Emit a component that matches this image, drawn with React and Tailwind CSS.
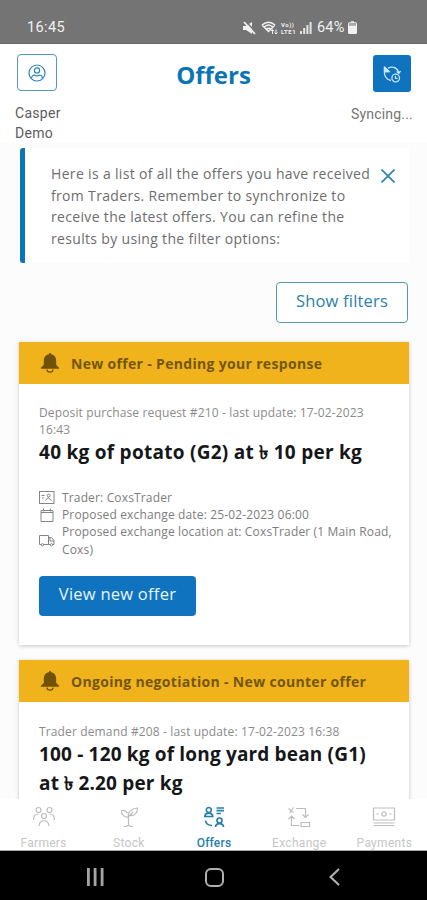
import React from 'react';

const openSans = "font-['Open_Sans','Noto_Sans',sans-serif]";

function Line({ children, className = '' }) {
  return <span className={`block whitespace-nowrap ${className}`}>{children}</span>;
}

function StatusBar() {
  return (
    <div className="flex h-11 shrink-0 items-center border-b border-[#686868] bg-[#747474] pt-[12px] pl-[27px] text-[14px] text-[#f1f1f1]">
      <span className="w-[216px] text-[14.5px] tracking-[0.4px]">16:45</span>
      <svg className="h-[14px] w-[13px]" viewBox="0 0 13 14">
        <path d="M0 5h3l6-4v12L3 9H0z" fill="#f1f1f1" />
        <path d="M2.500 0l10.500 11.500" stroke="#747474" strokeWidth="1.600" />
        <path d="M1 1l11 12" stroke="#f1f1f1" strokeWidth="1.800" />
      </svg>
      <svg className="ml-[5px] h-[14px] w-[17px]" viewBox="0 0 17 14" fill="none" stroke="#f1f1f1" strokeWidth="1.5">
        <path d="M1 4c4-3.500 9-3.500 13 0M3 6.300c3-3 6-3 9 0M5 8.500c2-1.800 3-1.800 5 0M1 4l6.500 6.500L14 4" />
        <path d="M11.500 13V8.500M10 10l1.500-1.500L13 10M15 8.500V13M13.700 11.500L15 13l1.500-1.500" strokeWidth="1" />
      </svg>
      <span className="ml-[3px] flex w-[17px] flex-col text-[6px] leading-[7px] font-bold tracking-[0.500px]">
        <span>Vo))</span>
        <span>LTE1</span>
      </span>
      <svg className="ml-[2px] h-[12px] w-[12px]" viewBox="0 0 12 12" fill="#e4e4e4">
        <path d="M0 9h2v3H0zM3.200 6h2v6h-2zM6.400 3h2v9h-2zM9.600 0h2v12h-2z" />
      </svg>
      <span className="ml-[5px] w-[30px] text-[14.5px] tracking-[0.2px] whitespace-nowrap">64%</span>
      <svg className="ml-[1px] h-[13px] w-[9px]" viewBox="0 0 9 13">
        <rect x="3" width="3" height="2" fill="#cfcfcf" />
        <rect y="1.300" width="9" height="11.700" rx="1.500" fill="#f1f1f1" />
        <rect x="1" y="2" width="7" height="2.800" fill="#aaa" />
      </svg>
    </div>
  );
}

function Header() {
  return (
    <header className="flex h-[99px] shrink-0 justify-between bg-white px-[15px] pt-[10px]">
      <div className="flex w-[80px] flex-col pl-[1.500px]">
        <button className="flex h-10 w-[40px] items-center justify-center rounded-[4px] border border-[#5398bd]">
          <svg className="h-[18px] w-[18px]" viewBox="0 0 18 18" fill="none" stroke="#2b85b7" strokeWidth="1.200">
            <circle cx="9" cy="9" r="8" />
            <circle cx="9" cy="6.500" r="2.600" />
            <path d="M3.500 14.500c.3-3 1.500-3.500 3-3.500c1.500 1 3.500 1 5 0c1.500 0 2.700.500 3 3.500" />
          </svg>
        </button>
        <div className="mt-[12px] -ml-[1.500px] text-[14px] leading-5 tracking-[0.3px] text-[#5c5c5c]">
          <Line>Casper</Line>
          <Line>Demo</Line>
        </div>
      </div>
      <h1 className={`${openSans} pt-[5px] text-[24px] leading-[31px] font-bold text-[#0b74b5]`}>Offers</h1>
      <div className="flex w-[80px] flex-col items-end">
        <button className="mt-[1px] mr-[1px] flex h-[37px] w-[38px] items-center justify-center rounded-[3px] bg-[#0f73c0]">
          <svg className="h-[18px] w-[18px]" viewBox="0 0 18 18" fill="none" stroke="#c9e5f7" strokeWidth="1.300">
            <path d="M5 3.200A7 7 0 0 1 15.700 8M2 5.500C.3 9.500 3 14.800 8 15.500M1.500 2v4.500H6M1.500 2L6 6.500" />
            <path d="M1.500 2.500v4H6z" fill="#c9e5f7" />
            <circle cx="12.700" cy="13" r="3.800" />
            <path d="M12.500 11v2.300h2M13.500 6.500l2.300 1.800 1.700-2.300" />
          </svg>
        </button>
        <span className="mt-[12px] -mr-[1px] text-[14px] leading-5 tracking-[0.2px] text-[#757575]">Syncing...</span>
      </div>
    </header>
  );
}

function Bell() {
  return (
    <svg className="h-[20px] w-[20px]" viewBox="0 0 20 20" fill="#6f5207">
      <path d="M10 0C9.300 0 9 .500 9 1.200C5.500 1.800 3.800 4.500 3.800 8v3.500C3.800 13 1 13.500.8 15.800h18.400C19 13.500 16.200 13 16.200 11.500V8c0-3.500-1.700-6.200-5.200-6.800C11 .500 10.700 0 10 0z" />
      <path d="M7 16.500a3 2.600 0 0 0 6 0" fill="none" stroke="#6f5207" strokeWidth="1.200" />
    </svg>
  );
}

function CardHeader({ children }) {
  return (
    <div className="flex h-[42px] items-center gap-[11px] bg-[#f1b31b] pl-[21px] text-[14px] font-bold text-[#73560c]">
      <Bell />
      {children}
    </div>
  );
}

function TraderIcon() {
  return (
    <svg className="h-[13px] w-[16px] shrink-0" viewBox="0 0 16 13" fill="none" stroke="#858585">
      <rect x=".5" y=".5" width="14.500" height="12" />
      <path d="M2.500 4.500h3M3 7h2M6.500 9.500L9 6.500l3.500 3M8.200 4.500a1.500 1.500 0 1 0 3 0a1.500 1.500 0 1 0-3 0" />
    </svg>
  );
}

function DateIcon() {
  return (
    <svg className="h-[14px] w-[16px] shrink-0" viewBox="0 0 16 14" fill="none" stroke="#858585">
      <path d="M2 2.500h12v11h-12zM2 4.500h12M4.500 .500v3M11.500 .500v3" />
    </svg>
  );
}

function TruckIcon() {
  return (
    <svg className="h-[13px] w-[16px] shrink-0" viewBox="0 0 16 13" fill="none" stroke="#858585">
      <path d="M2.500 10.500h-2v-9h9v9h-5M9.500 3.500h3l2.500 3v4h-1.500M9.500 10.500h2M11 4v3h4" />
      <circle cx="3.500" cy="10.800" r="1.200" />
      <circle cx="12.500" cy="10.800" r="1.200" />
    </svg>
  );
}

function OfferOne() {
  return (
    <article className="h-[303px] shrink-0 bg-white shadow-[0_1px_4px_rgba(0,0,0,0.22)]">
      <CardHeader>
        <Line className="tracking-[0.320px]">New offer - Pending your response</Line>
      </CardHeader>
      <div className="px-5 pt-[20px]">
        <div className="text-[12px] leading-[17px] tracking-[0.140px] text-[#8b8b8b]">
          <Line>Deposit purchase request #210 - last update: 17-02-2023</Line>
          <Line>16:43</Line>
        </div>
        <h2 className="text-[19px] leading-[29px] font-bold tracking-[0.270px] text-[#151719]">
          <Line>40 kg of potato (G2) at ৳ 10 per kg</Line>
        </h2>
        <ul className="mt-[22px] text-[12px] leading-[17.200px] tracking-[0.150px] text-[#7d7d7d]">
          <li className="flex items-center gap-[7px]"><TraderIcon /><Line>Trader: CoxsTrader</Line></li>
          <li className="flex items-center gap-[7px]"><DateIcon /><Line>Proposed exchange date: 25-02-2023 06:00</Line></li>
          <li className="flex items-center gap-[7px]">
            <TruckIcon />
            <div>
              <Line>Proposed exchange location at: CoxsTrader (1 Main Road,</Line>
              <Line>Coxs)</Line>
            </div>
          </li>
        </ul>
        <button className="mt-[18px] flex h-10 w-[157px] items-center justify-center rounded-[4px] bg-[#0f73c0] pb-[2px] text-[16.500px] tracking-[0.250px] text-[#e9f5fd]">
          View new offer
        </button>
      </div>
    </article>
  );
}

function OfferTwo() {
  return (
    <article className="mt-[15px] h-[180px] shrink-0 bg-white shadow-[0_1px_4px_rgba(0,0,0,0.22)]">
      <CardHeader>
        <Line className="tracking-[0.320px]">Ongoing negotiation - New counter offer</Line>
      </CardHeader>
      <div className="px-5 pt-[21px]">
        <Line className="text-[12px] leading-[17px] tracking-[0.140px] text-[#8b8b8b]">Trader demand #208 - last update: 17-02-2023 16:38</Line>
        <h2 className="text-[19px] leading-[28.500px] font-bold tracking-[0.170px] text-[#151719]">
          <Line>100 - 120 kg of long yard bean (G1)</Line>
          <Line>at ৳ 2.20 per kg</Line>
        </h2>
      </div>
    </article>
  );
}

function Main() {
  return (
    <main className={`${openSans} flex min-h-0 flex-1 flex-col overflow-hidden bg-[#fcfcfc] pt-[5px] pr-[18px] pl-[19px]`}>
      <section className="ml-[1px] flex h-[115px] shrink-0 rounded-l-[3px] border-l-[5px] border-[#0876b8] bg-white pt-[15px] pl-[26px]">
        <p className="w-[330px] text-[14px] leading-[21.700px] tracking-[0.330px] text-[#6d6d6d]">
          <Line>Here is a list of all the offers you have received</Line>
          <Line>from Traders. Remember to synchronize to</Line>
          <Line>receive the latest offers. You can refine the</Line>
          <Line>results by using the filter options:</Line>
        </p>
        <svg className="mt-[6px] h-[14px] w-[14px]" viewBox="0 0 14 14" stroke="#2b85b7" strokeWidth="1.700">
          <path d="M.5.5l13 13M13.500.500l-13 13" />
        </svg>
      </section>
      <button className="mt-[19px] mr-[1px] mb-[19px] flex h-[41px] w-[132px] shrink-0 items-center justify-center self-end rounded-[4px] border border-[#5398ad] bg-white pb-[3px] text-[16.500px] tracking-[0.200px] text-[#2b80ad]">
        Show filters
      </button>
      <OfferOne />
      <OfferTwo />
    </main>
  );
}

const tabs = [
  {
    label: 'Farmers',
    icon: <path d="M4 4a2.500 2.500 0 1 0 5 0a2.500 2.500 0 1 0-5 0M15 4a2.500 2.500 0 1 0 5 0a2.500 2.500 0 1 0-5 0M9.500 10a2.500 2.500 0 1 0 5 0a2.500 2.500 0 1 0-5 0M1.500 14c0-4 2-6 5-6M22.500 14c0-4-2-6-5-6M7 20c.5-7 9.500-7 10 0" />,
  },
  {
    label: 'Stock',
    icon: <path d="M11.500 20V10M11.500 11C8 11.500 4 9 4.500 4.500c3-.500 5 .500 6 3M11.500 11c-1-5 3-8.500 9-9c0 5-3 8-7 7.500M11.500 11l4.500-5M7 20.500h2.500l2-1.500 2 1.500H16" />,
  },
  {
    label: 'Offers',
    icon: (
      <path d="M4.300 4a2.500 2.500 0 1 0 5 0a2.500 2.500 0 1 0-5 0M2.800 10.500c.5-4.500 7.500-4.500 8 0zM15 14.500a2.500 2.500 0 1 0 5 0a2.500 2.500 0 1 0-5 0M13.500 21c.5-4.500 7.500-4.500 8 0M14.500 2h7.500M14.500 4.700h7.500M14.500 7.500h4.500M3.500 14.500c.5 3.500 3 5 6.500 5" />
    ),
  },
  {
    label: 'Exchange',
    icon: <path d="M9 2.500h9.500v9M15.500 8.500l3 3l3-3M4.500 10v9.500h8M1.500 13l3-3l3 3M1.500 2.500l5 4M6.500 1.500l-4 5.500M14 16.500h8.500v4H14z" />,
  },
  {
    label: 'Payments',
    icon: <path d="M1.500 2h21v12h-21zM9.800 8a2.200 2.200 0 1 0 4.400 0a2.200 2.200 0 1 0-4.400 0M4.500 8h2M17.500 8h2M1.500 17h21M1.500 19.500h21" />,
  },
];

function TabBar() {
  return (
    <nav className="flex h-[52px] shrink-0 justify-between border-b border-[#aaa] bg-white pt-[7px] pl-[1px]">
      {tabs.map(({ label, icon }) => {
        const active = label === 'Offers';
        return (
          <div key={label} className={`flex w-[85.400px] flex-col items-center ${active ? 'text-[#277fab]' : 'text-[#bdbdbd]'}`}>
            <svg className="h-[22px] w-[24px]" viewBox="0 0 24 22" fill="none" stroke="currentColor" strokeWidth={active ? 1.7 : 1.2}>
              {icon}
            </svg>
            <span className={`mt-[8px] text-[12px] leading-[14px] ${active ? 'tracking-[0.2px] font-medium' : 'tracking-[0.300px] text-[#c6c6c6]'}`}>{label}</span>
          </div>
        );
      })}
    </nav>
  );
}

function SystemBar() {
  return (
    <div className="flex h-[49px] shrink-0 items-center bg-black pt-[3px] pl-[86px]">
      <svg className="h-[18px] w-[18px]" viewBox="0 0 18 18" fill="#a5a5a5">
        <path d="M1 0h2.800v18H1zM7.700 0h2.800v18H7.700zM14.700 0h2.800v18h-2.800z" />
      </svg>
      <div className="ml-[101px] h-[19px] w-[19px] rounded-[6px] border-2 border-[#b0b0b0]" />
      <svg className="ml-[105px] h-[18px] w-[11px]" viewBox="0 0 11 18" fill="none" stroke="#b0b0b0" strokeWidth="2.200">
        <path d="M10 1L1.500 9l8.500 8" />
      </svg>
    </div>
  );
}

export default function App() {
  return (
    <div className="flex h-[900px] w-[427px] flex-col overflow-hidden bg-white font-[Roboto,sans-serif]">
      <StatusBar />
      <Header />
      <Main />
      <TabBar />
      <SystemBar />
    </div>
  );
}
